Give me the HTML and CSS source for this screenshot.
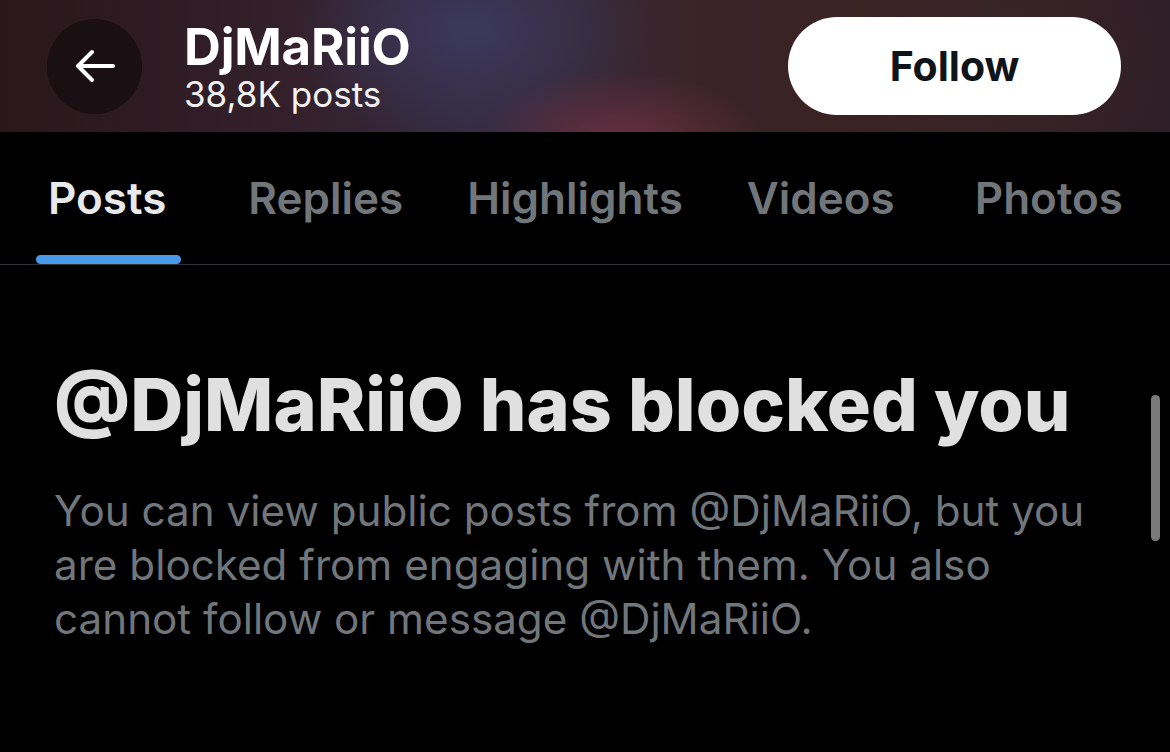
FILE: index.html
```html
<!DOCTYPE html>
<html lang="en">
<head>
<meta charset="utf-8">
<title>DjMaRiiO</title>
<link rel="stylesheet" href="styles.css">
</head>
<body>
<div class="page">
  <header class="topbar">
    <div class="left">
      <button class="back" aria-label="Back">
        <svg width="40" height="34" viewBox="0 0 40 34" fill="none" stroke="#fff" stroke-width="4" stroke-linecap="round" stroke-linejoin="round"><path d="M38 17H3M17 3L3 17l14 14"/></svg>
      </button>
      <div class="titles">
        <div class="name">DjMaRiiO</div>
        <div class="count">38,8K posts</div>
      </div>
    </div>
    <button class="follow">Follow</button>
  </header>
  <nav class="tabs">
    <div class="tab active">Posts<span class="bar"></span></div>
    <div class="tab tab-replies">Replies</div>
    <div class="tab">Highlights</div>
    <div class="tab tab-videos">Videos</div>
    <div class="tab">Photos</div>
  </nav>
  <main class="content">
    <h1 class="heading">@DjMaRiiO has blocked you</h1>
    <p class="desc">You can view public posts from @DjMaRiiO, but you are blocked from engaging with them. You also cannot follow or message @DjMaRiiO.</p>
    <div class="scroll"></div>
  </main>
</div>
</body>
</html>
```

FILE: styles.css
```css
* { box-sizing: border-box; }
html, body { margin: 0; padding: 0; background: #000; }
body {
  width: 1170px;
  height: 752px;
  overflow: hidden;
  font-family: Inter, "Noto Sans", "Liberation Sans", sans-serif;
}
.page { display: flex; flex-direction: column; height: 752px; }
.topbar {
  height: 132px;
  flex: none;
  display: flex;
  align-items: center;
  justify-content: space-between;
  padding: 0 49px 0 47px;
  background:
    radial-gradient(ellipse 140px 70px at 620px 140px, rgba(120,50,70,0.75), rgba(120,50,70,0) 100%),
    radial-gradient(ellipse 180px 120px at 470px 30px, rgba(60,58,95,0.9), rgba(60,58,95,0) 100%),
    radial-gradient(ellipse 200px 140px at 1000px 60px, rgba(60,38,45,0.6), rgba(60,38,45,0) 100%),
    linear-gradient(90deg, #2a171b 0%, #33202a 25%, #352a40 40%, #3a2428 60%, #3a2222 75%, #2e1e26 100%);
}
.left { display: flex; align-items: center; gap: 42px; }
.back {
  width: 95px; height: 95px;
  border-radius: 50%;
  border: none;
  background: #1a0f12;
  display: flex; align-items: center; justify-content: center;
  padding: 0;
}
.titles { display: flex; flex-direction: column; margin-top: 2px; }
.name { color: #fff; font-weight: 700; font-size: 51px; line-height: 54px; letter-spacing: -0.2px; }
.count { color: #f2f2f2; font-weight: 400; font-size: 35px; line-height: 40px; }
.follow {
  width: 333px; height: 98px;
  border-radius: 49px;
  border: none;
  background: #fff;
  color: #0f1419;
  font-family: inherit;
  font-size: 41px;
  font-weight: 700;
  padding: 0;
}
.tabs {
  height: 133px;
  flex: none;
  display: flex;
  align-items: stretch;
  justify-content: space-between;
  padding: 0 47px 0 48px;
  border-bottom: 1px solid #2f3336;
}
.tab {
  position: relative;
  display: flex;
  align-items: center;
  color: #71767b;
  font-size: 44px;
  font-weight: 600;
  line-height: 50px;
}
.tab-replies { margin-left: 18px; }
.tab-videos { margin-right: 16px; }
.tab.active { color: #e7e9ea; }
.bar {
  position: absolute;
  left: -12px; right: -15px;
  bottom: 0;
  height: 9px;
  border-radius: 5px;
  background: #4a99e9;
}
.content { position: relative; flex: 1; padding: 98px 40px 0 54px; }
.heading {
  margin: 0;
  color: #e0e0e0;
  font-size: 73.5px;
  font-weight: 800;
  line-height: 84px;
  letter-spacing: 0;
}
.desc {
  margin: 37px 0 0;
  max-width: 1072px;
  color: #71767b;
  font-size: 42.2px;
  font-weight: 400;
  line-height: 54px;
}
.scroll {
  position: absolute;
  right: 10px; top: 130px;
  width: 9px; height: 146px;
  border-radius: 5px;
  background: #7a7a7a;
}
```
